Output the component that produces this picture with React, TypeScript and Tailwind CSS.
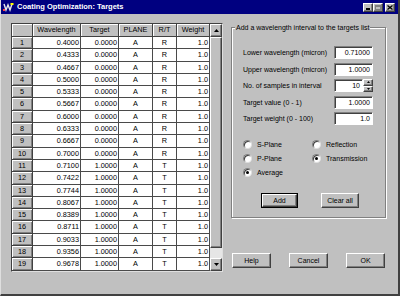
import React from 'react';

const rows: [string, string, string, string][] = [
  ['0.4000', '0.0000', 'A', 'R'],
  ['0.4333', '0.0000', 'A', 'R'],
  ['0.4667', '0.0000', 'A', 'R'],
  ['0.5000', '0.0000', 'A', 'R'],
  ['0.5333', '0.0000', 'A', 'R'],
  ['0.5667', '0.0000', 'A', 'R'],
  ['0.6000', '0.0000', 'A', 'R'],
  ['0.6333', '0.0000', 'A', 'R'],
  ['0.6667', '0.0000', 'A', 'R'],
  ['0.7000', '0.0000', 'A', 'R'],
  ['0.7100', '1.0000', 'A', 'T'],
  ['0.7422', '1.0000', 'A', 'T'],
  ['0.7744', '1.0000', 'A', 'T'],
  ['0.8067', '1.0000', 'A', 'T'],
  ['0.8389', '1.0000', 'A', 'T'],
  ['0.8711', '1.0000', 'A', 'T'],
  ['0.9033', '1.0000', 'A', 'T'],
  ['0.9356', '1.0000', 'A', 'T'],
  ['0.9678', '1.0000', 'A', 'T'],
];

const raised =
  'bg-[#c0c0c0] border border-t-white border-l-white border-b-[#404040] border-r-[#404040] shadow-[inset_-1px_-1px_0_#808080]';
const sunken =
  'bg-white border border-t-[#808080] border-l-[#808080] border-b-white border-r-white shadow-[inset_1px_1px_0_#404040]';

function Arrow({ up }: { up?: boolean }) {
  return (
    <svg width="5" height="3" viewBox="0 0 5 3">
      <path d={up ? 'M0 3 L2.5 0 L5 3 Z' : 'M0 0 L2.5 3 L5 0 Z'} fill="#000" />
    </svg>
  );
}

function Field({ label, value }: { label: string; value: string }) {
  return (
    <div className="h-[13px] flex items-center justify-between">
      <span>{label}</span>
      <div className={`${sunken} w-[39px] h-[13px] flex items-center justify-end pr-[2px]`}>{value}</div>
    </div>
  );
}

function Radio({ label, checked }: { label: string; checked?: boolean }) {
  return (
    <div className="flex items-center gap-[5px] h-[14px]">
      <span className="w-[9px] h-[9px] rounded-full bg-white border border-t-[#808080] border-l-[#808080] border-b-[#dfdfdf] border-r-[#dfdfdf] shadow-[inset_1px_1px_0_#404040] flex items-center justify-center">
        {checked && <span className="w-[3px] h-[3px] rounded-full bg-black" />}
      </span>
      <span>{label}</span>
    </div>
  );
}

function Button({ label, w, isDefault }: { label: string; w: string; isDefault?: boolean }) {
  if (isDefault) {
    return (
      <div className={`${w} h-[15px] border border-black flex`}>
        <div className={`${raised} flex-1 flex items-center justify-center`}>{label}</div>
      </div>
    );
  }
  return <div className={`${raised} ${w} h-[15px] flex items-center justify-center`}>{label}</div>;
}

export default function App() {
  return (
    <div className="w-[400px] h-[296px] bg-[#c0c0c0] border-l border-l-[#dfdfdf] border-r-2 border-r-[#404040] border-b-2 border-b-[#404040] flex flex-col font-['Liberation_Sans',Arial,sans-serif] text-[7.2px] leading-none text-black">
      {/* title bar */}
      <div className="h-[14px] bg-[#000080] flex items-center pl-[2px] pr-[3px]">
        <svg width="11" height="10" viewBox="0 0 11 10">
          <rect x="0" y="0" width="11" height="10" fill="#000080" />
          <path d="M1 2 L3 8 L5 3 L7 8 L9 2" stroke="#e8e8e8" strokeWidth="1.4" fill="none" />
          <rect x="7.5" y="1" width="3" height="2" fill="#ffff00" />
          <rect x="0" y="7" width="2" height="2" fill="#ff4040" />
        </svg>
        <span className="ml-[3px] text-white font-bold text-[7.5px]">Coating Optimization: Targets</span>
        <div className="ml-auto flex items-center">
          <div className={`${raised} w-[10px] h-[9px] flex items-end justify-center pb-[1px]`}>
            <div className="w-[4px] h-[1.5px] bg-black" />
          </div>
          <div className={`${raised} w-[10px] h-[9px] flex items-center justify-center`}>
            <div className="w-[6px] h-[5px] border border-[#808080] border-t-2" />
          </div>
          <div className={`${raised} ml-[2px] w-[10px] h-[9px] flex items-center justify-center`}>
            <svg width="6" height="5" viewBox="0 0 6 5">
              <path d="M0.5 0.5 L5.5 4.5 M5.5 0.5 L0.5 4.5" stroke="#000" strokeWidth="1.3" />
            </svg>
          </div>
        </div>
      </div>

      <div className="flex pt-[9px] pl-[10px]">
        {/* grid */}
        <div className="w-[212px] h-[249px] border border-t-[#404040] border-l-[#404040] border-b-[#dfdfdf] border-r-[#dfdfdf] flex">
          <div className="w-[198px] flex flex-col">
            <div className="h-[13px] flex text-[7.3px]">
              {[
                ['', 'w-[21px]'],
                ['Wavelength', 'w-[48px]'],
                ['Target', 'w-[38px]'],
                ['PLANE', 'w-[34px]'],
                ['R/T', 'w-[24px]'],
                ['Weight', 'w-[33px]'],
              ].map(([t, w]) => (
                <div
                  key={w + t}
                  className={`${w} h-full bg-[#c0c0c0] border-r border-b border-[#404040] shadow-[inset_1px_1px_0_#fff] flex items-center justify-center`}
                >
                  {t}
                </div>
              ))}
            </div>
            {rows.map((r, i) => (
              <div key={i} className="h-[12.3px] flex text-[7.3px]">
                <div className="w-[21px] h-full bg-[#c0c0c0] border-r border-b border-[#404040] shadow-[inset_1px_1px_0_#fff,inset_-1px_-1px_0_#808080] flex items-center justify-center">
                  {i + 1}
                </div>
                <div className="w-[48px] h-full bg-white border-r border-b border-[#4a4a4a] flex items-center justify-end pr-[1px]">
                  {r[0]}
                </div>
                <div className="w-[38px] h-full bg-white border-r border-b border-[#4a4a4a] flex items-center justify-end pr-[1px]">
                  {r[1]}
                </div>
                <div className="w-[34px] h-full bg-white border-r border-b border-[#4a4a4a] flex items-center justify-center">
                  {r[2]}
                </div>
                <div className="w-[24px] h-full bg-white border-r border-b border-[#4a4a4a] flex items-center justify-center">
                  {r[3]}
                </div>
                <div className="w-[33px] h-full bg-white border-r border-b border-[#4a4a4a] flex items-center justify-end pr-[1px]">
                  1.0
                </div>
              </div>
            ))}
          </div>
          {/* scrollbar */}
          <div className="w-[12px] flex flex-col">
            <div className={`${raised} h-[13px] flex items-center justify-center`}>
              <Arrow up />
            </div>
            <div className={`${raised} flex-1`} />
            <div className="h-[10px] bg-[#e6e6e6]" />
            <div className={`${raised} h-[13px] flex items-center justify-center`}>
              <Arrow />
            </div>
          </div>
        </div>

        {/* right side */}
        <div className="ml-[8px] flex flex-col">
          <div className="relative mt-[4px] w-[155px] h-[191px] border border-[#808080] shadow-[inset_1px_1px_0_#fff,1px_1px_0_#fff] pl-[11px] pr-[12px] pt-[18px] text-[7px]">
            <span className="absolute left-[3px] -top-[4px] bg-[#c0c0c0] px-[1px]">
              Add a wavelength interval to the targets list
            </span>
            <div className="flex flex-col gap-[3.5px]">
              <Field label="Lower wavelength (micron)" value="0.71000" />
              <Field label="Upper wavelength (micron)" value="1.0000" />
              <div className="h-[13px] flex items-center justify-between">
                <span>No. of samples in interval</span>
                <div className="flex">
                  <div className={`${sunken} w-[29px] h-[13px] flex items-center justify-end pr-[2px]`}>10</div>
                  <div className="w-[10px] h-[13px] flex flex-col">
                    <div className={`${raised} h-[6.5px] flex items-center justify-center`}>
                      <svg width="3" height="2" viewBox="0 0 3 2"><path d="M0 2 L1.5 0 L3 2 Z" fill="#000" /></svg>
                    </div>
                    <div className={`${raised} h-[6.5px] flex items-center justify-center`}>
                      <svg width="3" height="2" viewBox="0 0 3 2"><path d="M0 0 L1.5 2 L3 0 Z" fill="#000" /></svg>
                    </div>
                  </div>
                </div>
              </div>
              <Field label="Target value (0 - 1)" value="1.0000" />
              <Field label="Target weight  (0 - 100)" value="1.0" />
            </div>
            <div className="mt-[12px] grid grid-cols-[69px_1fr]">
              <Radio label="S-Plane" />
              <Radio label="Reflection" />
              <Radio label="P-Plane" />
              <Radio label="Transmission" checked />
              <Radio label="Average" checked />
            </div>
            <div className="mt-[14px] flex pl-[18px] gap-[23px]">
              <Button label="Add" w="w-[37px]" isDefault />
              <Button label="Clear all" w="w-[38px]" />
            </div>
          </div>
          <div className="mt-[35px] pl-[1px] flex gap-[18px] text-[7px]">
            <Button label="Help" w="w-[39px]" />
            <Button label="Cancel" w="w-[39px]" />
            <Button label="OK" w="w-[39px]" />
          </div>
        </div>
      </div>
    </div>
  );
}
